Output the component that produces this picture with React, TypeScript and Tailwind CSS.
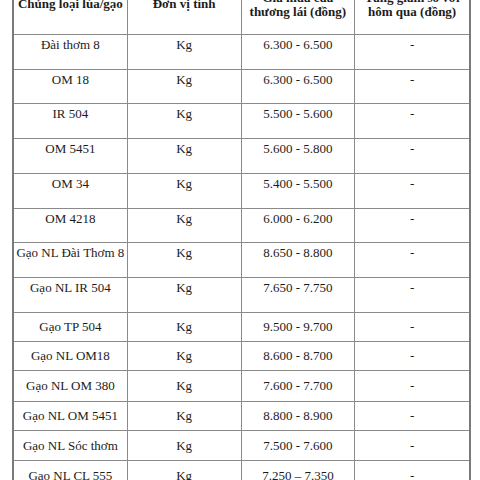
const rows: { name: string; price: string; h: number; top: boolean }[] = [
  { name: 'Đài thơm 8', price: '6.300 - 6.500', h: 35, top: true },
  { name: 'OM 18', price: '6.300 - 6.500', h: 34, top: true },
  { name: 'IR 504', price: '5.500 - 5.600', h: 35, top: true },
  { name: 'OM 5451', price: '5.600 - 5.800', h: 35, top: true },
  { name: 'OM 34', price: '5.400 - 5.500', h: 35, top: true },
  { name: 'OM 4218', price: '6.000 - 6.200', h: 34, top: true },
  { name: 'Gạo NL Đài Thơm 8', price: '8.650 - 8.800', h: 35, top: true },
  { name: 'Gạo NL IR 504', price: '7.650 - 7.750', h: 35, top: true },
  { name: 'Gạo TP 504', price: '9.500 - 9.700', h: 29, top: false },
  { name: 'Gạo NL OM18', price: '8.600 - 8.700', h: 29, top: false },
  { name: 'Gạo NL OM 380', price: '7.600 - 7.700', h: 31, top: false },
  { name: 'Gạo NL OM 5451', price: '8.800 - 8.900', h: 29, top: false },
  { name: 'Gạo NL Sóc thơm', price: '7.500 - 7.600', h: 30, top: false },
  { name: 'Gạo NL CL 555', price: '7.250 – 7.350', h: 30, top: false },
];

// tall rows keep their text near the top, the short ones centre it
function Cell({ children, last, top }: { children: React.ReactNode; last?: boolean; top: boolean }) {
  return (
    <div
      className={`flex justify-center text-center whitespace-nowrap ${top ? 'items-start pt-[2px]' : 'items-center'} ${
        last ? '' : 'border-r border-[#8a8a8a]'
      }`}
    >
      {children}
    </div>
  );
}

export default function App() {
  return (
    <div
      className="w-[480px] h-[480px] overflow-hidden bg-white text-[#1c1c1c] text-[13px] leading-[16px]"
      style={{ fontFamily: '"Liberation Serif", "Times New Roman", serif' }}
    >
      <div className="ml-[12px] w-[459px] mt-[-9px] border-x-2 border-[#7a7a7a]">
        {/* header, its first line runs off the top of the picture */}
        <div className="grid grid-cols-4 h-[44px] border-b border-[#8a8a8a] font-bold leading-[14px]">
          <div className="flex justify-center pt-[6px] border-r border-[#8a8a8a]">Chủng loại lúa/gạo</div>
          <div className="flex justify-center pt-[6px] border-r border-[#8a8a8a]">Đơn vị tính</div>
          <div className="flex flex-col items-center border-r border-[#8a8a8a]">
            <span>Giá mua của</span>
            <span>thương lái (đồng)</span>
          </div>
          <div className="flex flex-col items-center">
            <span>Tăng giảm so với</span>
            <span>hôm qua (đồng)</span>
          </div>
        </div>

        {rows.map((r, i) => (
          <div
            key={i}
            className="grid grid-cols-4 border-b border-[#8a8a8a]"
            style={{ height: r.h }}
          >
            <Cell top={r.top}>{r.name}</Cell>
            <Cell top={r.top}>Kg</Cell>
            <Cell top={r.top}>{r.price}</Cell>
            <Cell top={r.top} last>
              -
            </Cell>
          </div>
        ))}
      </div>
    </div>
  );
}
